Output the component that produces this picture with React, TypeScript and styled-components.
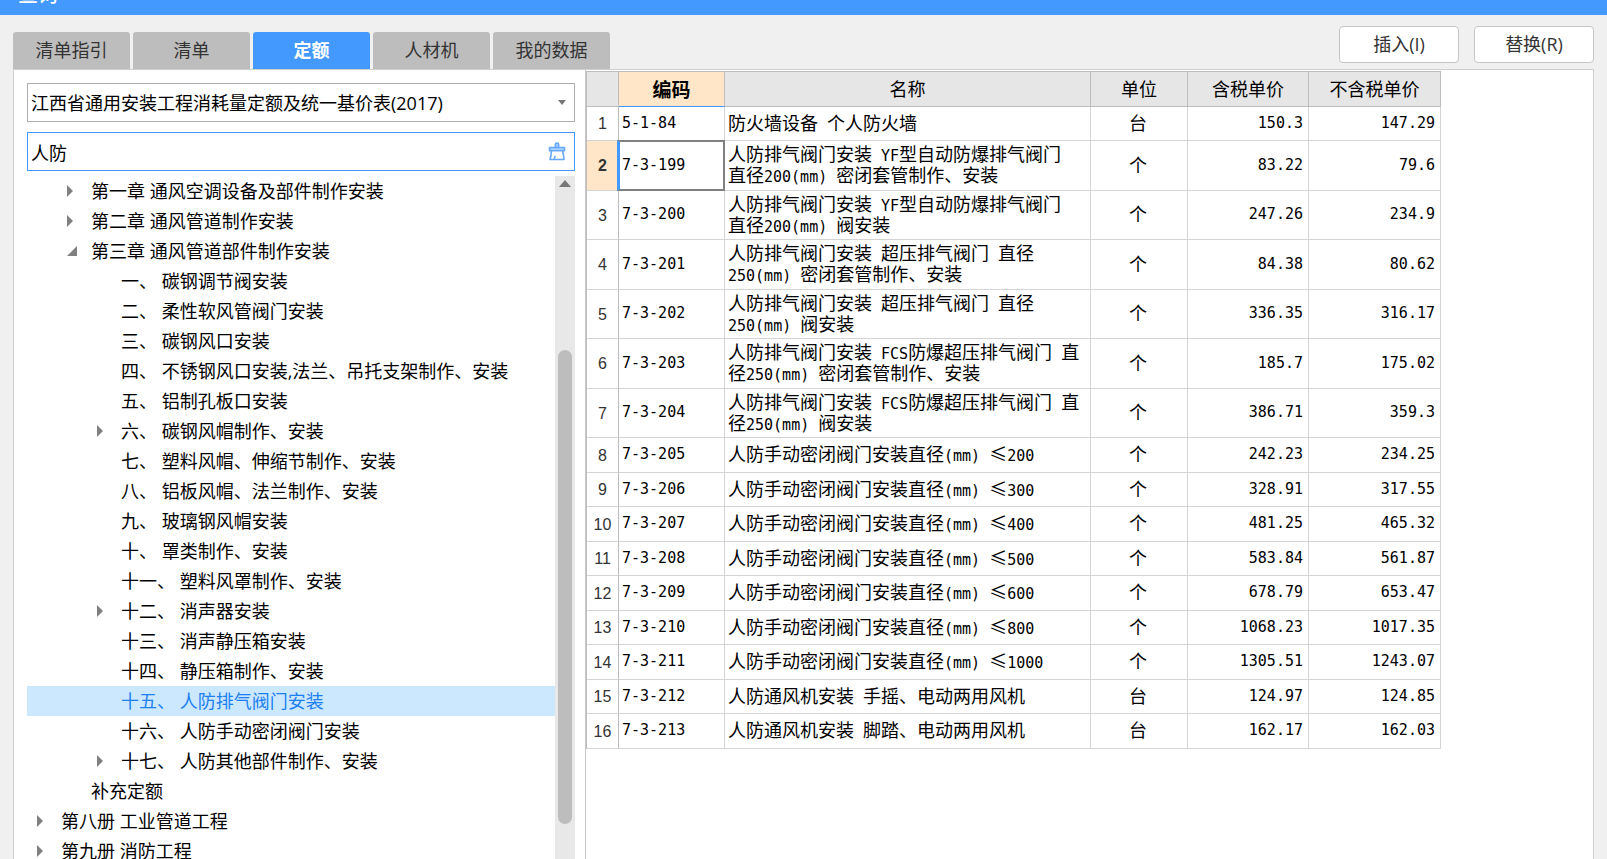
import React, { useState } from 'react';
import styled, { createGlobalStyle, css } from 'styled-components';

const uiFont = '"Open Sans", "Noto Sans CJK SC", sans-serif';
const gridFont = '"Noto Sans CJK SC", sans-serif';
const blue = '#4499ff';

const GlobalStyle = createGlobalStyle`
  * { box-sizing: border-box; }
  body { margin: 0; background: #f0f0f0; font-family: ${uiFont}; color: #000; }
  button, input, select { font: inherit; color: inherit; margin: 0; }
`;

const Window = styled.div`
  display: flex;
  flex-direction: column;
  height: 100vh;
  overflow: hidden;
`;

const TitleBar = styled.header`
  display: flex;
  align-items: flex-end;
  flex: none;
  height: 15px;
  padding-left: 18px;
  overflow: hidden;
  background: ${blue};
`;

const Title = styled.h1`
  margin: 0 0 9px;
  font-size: 20px;
  line-height: 24px;
  font-weight: 500;
  font-family: ${gridFont};
  color: #fff;
`;

const Toolbar = styled.div`
  display: flex;
  justify-content: space-between;
  align-items: flex-end;
  flex: none;
  height: 54px;
  padding: 0 13px;
`;

const Tabs = styled.div`
  display: flex;
  gap: 3px;
`;

const Tab = styled.button<{ $active: boolean }>`
  width: 117px;
  height: 37px;
  padding: 0 0 2px;
  border: 0;
  border-radius: 3px 3px 0 0;
  font-size: 18px;
  line-height: 24px;
  background: ${(p) => (p.$active ? blue : '#bdbdbd')};
  color: ${(p) => (p.$active ? '#fff' : '#333')};
  font-weight: ${(p) => (p.$active ? 700 : 400)};
`;

const Actions = styled.div`
  display: flex;
  gap: 15px;
  padding-bottom: 6px;
`;

const ActionButton = styled.button`
  width: 120px;
  height: 37px;
  padding: 0 0 2px;
  border: 1px solid #c6c6c6;
  border-radius: 4px;
  background: #fff;
  color: #333;
  font-size: 18px;
  line-height: 24px;
`;

const Panel = styled.main`
  display: flex;
  flex: 1;
  min-height: 0;
  margin: 0 13px;
  border: 1px solid #d0d0d0;
  border-bottom: 0;
  background: #fff;
`;

const Sidebar = styled.section`
  display: flex;
  flex-direction: column;
  flex: none;
  width: 571px;
  padding: 13px 10px 0 13px;
`;

const Field = styled.div<{ $focused?: boolean }>`
  display: flex;
  align-items: center;
  flex: none;
  height: 39px;
  margin-bottom: ${(p) => (p.$focused ? 5 : 10)}px;
  padding-right: 8px;
  border: 1px solid ${(p) => (p.$focused ? blue : '#adadad')};
`;

const control = css`
  flex: 1;
  min-width: 0;
  height: 100%;
  padding: 0 3px;
  border: 0;
  outline: 0;
  background: none;
  font-size: 18px;
`;

const LibrarySelect = styled.select`
  ${control}
  appearance: none;
`;

const SearchInput = styled.input`
  ${control}
`;

const IconButton = styled.button`
  display: flex;
  padding: 0;
  border: 0;
  background: none;
`;

const TreeArea = styled.div`
  display: flex;
  flex: 1;
  min-height: 0;
`;

const Tree = styled.ul`
  flex: 1;
  margin: 0;
  padding: 0;
  list-style: none;
  overflow: hidden;
`;

const TreeRow = styled.li<{ $level: number; $selected: boolean }>`
  display: flex;
  align-items: center;
  height: 30px;
  padding-left: ${(p) => 10 + p.$level * 30}px;
  font-size: 18px;
  line-height: 30px;
  white-space: nowrap;
  background: ${(p) => (p.$selected ? '#cce8ff' : 'transparent')};
  color: ${(p) => (p.$selected ? '#1e80f0' : '#000')};
`;

const ArrowSlot = styled.span`
  display: flex;
  flex: none;
  width: 24px;
`;

const ScrollTrack = styled.div`
  display: flex;
  flex-direction: column;
  align-items: center;
  flex: none;
  width: 20px;
  background: #e8e8e8;
`;

const ScrollThumb = styled.div`
  flex: none;
  width: 14px;
  height: 474px;
  margin-top: 161px;
  border-radius: 7px;
  background: #bdbdbd;
`;

const Content = styled.section`
  flex: 1;
  min-width: 0;
  padding-top: 1px;
  border-left: 1px solid #c8c8c8;
`;

const Grid = styled.table`
  width: 855px;
  table-layout: fixed;
  border-collapse: separate;
  border-spacing: 0;
  border-top: 1px solid #bdbdbd;
  border-left: 1px solid #bdbdbd;
  font-family: ${gridFont};
  font-size: 18px;
  line-height: 21px;
`;

const Col = styled.col<{ $w: number }>`
  width: ${(p) => p.$w}px;
`;

const HeadCell = styled.th<{ $active?: boolean }>`
  height: 35px;
  padding: 0 0 2px;
  border-right: 1px solid #bdbdbd;
  border-bottom: 1px solid ${(p) => (p.$active ? blue : '#bdbdbd')};
  background: ${(p) => (p.$active ? '#ffe6c8' : '#e6e6e6')};
  font-size: ${(p) => (p.$active ? 19 : 18)}px;
  font-weight: ${(p) => (p.$active ? 700 : 400)};
`;

const Row = styled.tr<{ $tall: boolean }>`
  height: ${(p) => (p.$tall ? 49 : 34)}px;
  &:nth-child(even) {
    height: ${(p) => (p.$tall ? 50 : 35)}px;
  }
`;

const Cell = styled.td<{ $align?: 'left' | 'center' | 'right' }>`
  padding: 0 5px 3px 3px;
  border-right: 1px solid #d4d4d4;
  border-bottom: 1px solid #d4d4d4;
  text-align: ${(p) => p.$align || 'left'};
  vertical-align: middle;
`;

const RowNumber = styled.th<{ $active: boolean }>`
  padding: 0;
  border-right: 1px solid #bdbdbd;
  border-bottom: 1px solid #d4d4d4;
  font-family: "Liberation Sans", sans-serif;
  font-size: 16px;
  font-weight: ${(p) => (p.$active ? 700 : 400)};
  color: #333;
  background: ${(p) => (p.$active ? '#ffe6c8' : '#fff')};
`;

const CodeCell = styled(Cell)<{ $current: boolean }>`
  position: relative;
  ${(p) =>
    p.$current &&
    css`
      &::after {
        content: '';
        position: absolute;
        inset: -1px -1px -1px -2px;
        border: 3px solid #808080;
        border-width: 2px 2px 2px 3px;
        border-left-color: ${blue};
      }
    `}
`;

const Mono = styled.span`
  font-family: "DejaVu Sans Mono", monospace;
  font-size: 15px;
  line-height: 15px;
`;

const Num = styled(Mono)`
  display: block;
  padding-top: 2px;
`;

type Node = { text: string; level: number; arrow?: 'closed' | 'open' };

const nodes: Node[] = [
  { text: '第一章 通风空调设备及部件制作安装', level: 1, arrow: 'closed' },
  { text: '第二章 通风管道制作安装', level: 1, arrow: 'closed' },
  { text: '第三章 通风管道部件制作安装', level: 1, arrow: 'open' },
  { text: '一、 碳钢调节阀安装', level: 2 },
  { text: '二、 柔性软风管阀门安装', level: 2 },
  { text: '三、 碳钢风口安装', level: 2 },
  { text: '四、 不锈钢风口安装,法兰、吊托支架制作、安装', level: 2 },
  { text: '五、 铝制孔板口安装', level: 2 },
  { text: '六、 碳钢风帽制作、安装', level: 2, arrow: 'closed' },
  { text: '七、 塑料风帽、伸缩节制作、安装', level: 2 },
  { text: '八、 铝板风帽、法兰制作、安装', level: 2 },
  { text: '九、 玻璃钢风帽安装', level: 2 },
  { text: '十、 罩类制作、安装', level: 2 },
  { text: '十一、 塑料风罩制作、安装', level: 2 },
  { text: '十二、 消声器安装', level: 2, arrow: 'closed' },
  { text: '十三、 消声静压箱安装', level: 2 },
  { text: '十四、 静压箱制作、安装', level: 2 },
  { text: '十五、 人防排气阀门安装', level: 2 },
  { text: '十六、 人防手动密闭阀门安装', level: 2 },
  { text: '十七、 人防其他部件制作、安装', level: 2, arrow: 'closed' },
  { text: '补充定额', level: 1 },
  { text: '第八册 工业管道工程', level: 0, arrow: 'closed' },
  { text: '第九册 消防工程', level: 0, arrow: 'closed' },
];

type Item = [code: string, name: string, unit: string, taxed: string, untaxed: string, tall?: boolean];

const items: Item[] = [
  ['5-1-84', '防火墙设备 个人防火墙', '台', '150.3', '147.29'],
  ['7-3-199', '人防排气阀门安装 YF型自动防爆排气阀门 直径200(mm) 密闭套管制作、安装', '个', '83.22', '79.6', true],
  ['7-3-200', '人防排气阀门安装 YF型自动防爆排气阀门 直径200(mm) 阀安装', '个', '247.26', '234.9', true],
  ['7-3-201', '人防排气阀门安装 超压排气阀门 直径250(mm) 密闭套管制作、安装', '个', '84.38', '80.62', true],
  ['7-3-202', '人防排气阀门安装 超压排气阀门 直径250(mm) 阀安装', '个', '336.35', '316.17', true],
  ['7-3-203', '人防排气阀门安装 FCS防爆超压排气阀门 直径250(mm) 密闭套管制作、安装', '个', '185.7', '175.02', true],
  ['7-3-204', '人防排气阀门安装 FCS防爆超压排气阀门 直径250(mm) 阀安装', '个', '386.71', '359.3', true],
  ['7-3-205', '人防手动密闭阀门安装直径(mm) ≤200', '个', '242.23', '234.25'],
  ['7-3-206', '人防手动密闭阀门安装直径(mm) ≤300', '个', '328.91', '317.55'],
  ['7-3-207', '人防手动密闭阀门安装直径(mm) ≤400', '个', '481.25', '465.32'],
  ['7-3-208', '人防手动密闭阀门安装直径(mm) ≤500', '个', '583.84', '561.87'],
  ['7-3-209', '人防手动密闭阀门安装直径(mm) ≤600', '个', '678.79', '653.47'],
  ['7-3-210', '人防手动密闭阀门安装直径(mm) ≤800', '个', '1068.23', '1017.35'],
  ['7-3-211', '人防手动密闭阀门安装直径(mm) ≤1000', '个', '1305.51', '1243.07'],
  ['7-3-212', '人防通风机安装 手摇、电动两用风机', '台', '124.97', '124.85'],
  ['7-3-213', '人防通风机安装 脚踏、电动两用风机', '台', '162.17', '162.03'],
];

/* Latin letters, digits and spaces take half the width of a Chinese character. */
const HalfWidth = ({ text }: { text: string }) => (
  <>
    {text.split(/([\x20-\x7e]+)/).map((part, i) => (i % 2 ? <Mono key={i}>{part}</Mono> : part))}
  </>
);

const Arrow = ({ kind }: { kind?: Node['arrow'] }) => {
  if (kind === 'closed') {
    return (
      <svg width="6" height="12" viewBox="0 0 6 12" aria-hidden="true">
        <path d="M0 0L6 6L0 12Z" fill="#808080" />
      </svg>
    );
  }
  if (kind === 'open') {
    return (
      <svg width="10" height="10" viewBox="0 0 10 10" aria-hidden="true">
        <path d="M10 0V10H0Z" fill="#808080" />
      </svg>
    );
  }
  return null;
};

const tabs = ['清单指引', '清单', '定额', '人材机', '我的数据'];

export default function App() {
  const [tab, setTab] = useState(2);
  const [selected, setSelected] = useState(17);
  const [query, setQuery] = useState('人防');

  return (
    <Window>
      <GlobalStyle />
      <TitleBar>
        <Title>查询</Title>
      </TitleBar>
      <Toolbar>
        <Tabs role="tablist">
          {tabs.map((t, i) => (
            <Tab key={t} type="button" role="tab" aria-selected={i === tab} $active={i === tab} onClick={() => setTab(i)}>
              {t}
            </Tab>
          ))}
        </Tabs>
        <Actions>
          <ActionButton type="button">插入(I)</ActionButton>
          <ActionButton type="button">替换(R)</ActionButton>
        </Actions>
      </Toolbar>
      <Panel>
        <Sidebar>
          <Field>
            <LibrarySelect aria-label="定额库">
              <option>江西省通用安装工程消耗量定额及统一基价表(2017)</option>
            </LibrarySelect>
            <svg width="8" height="5" viewBox="0 0 8 5" aria-hidden="true">
              <path d="M0 0H8L4 5Z" fill="#777" />
            </svg>
          </Field>
          <Field $focused>
            <SearchInput aria-label="搜索" value={query} onChange={(e) => setQuery(e.target.value)} />
            <IconButton type="button" aria-label="清除" onClick={() => setQuery('')}>
              <svg width="18" height="19" viewBox="0 0 18 19" fill="none" stroke="#66a9fb" strokeWidth="1.6" strokeLinejoin="round">
                <path d="M7.300 5.500V2.500Q7.300 1 9 1T10.700 2.500V5.500" fill="#a9d0ff" />
                <path d="M1.500 5.500H16.500V8.800H1.500Z" fill="#a9d0ff" />
                <path d="M3.300 9Q3.300 14 2 17.500H16Q15.700 14 14.700 9" />
                <path d="M6 17Q7 15.500 7 13.800" />
              </svg>
            </IconButton>
          </Field>
          <TreeArea>
            <Tree role="tree">
              {nodes.map((n, i) => (
                <TreeRow
                  key={n.text}
                  role="treeitem"
                  aria-selected={i === selected}
                  $level={n.level}
                  $selected={i === selected}
                  onClick={() => setSelected(i)}
                >
                  <ArrowSlot>
                    <Arrow kind={n.arrow} />
                  </ArrowSlot>
                  {n.text}
                </TreeRow>
              ))}
            </Tree>
            <ScrollTrack>
              <svg width="12" height="13" viewBox="0 0 12 13" aria-hidden="true">
                <path d="M0 11L6 4L12 11Z" fill="#777" />
              </svg>
              <ScrollThumb />
            </ScrollTrack>
          </TreeArea>
        </Sidebar>
        <Content>
          <Grid>
            <colgroup>
              {[32, 106, 366, 97, 121, 132].map((w) => (
                <Col key={w} $w={w} />
              ))}
            </colgroup>
            <thead>
              <tr>
                <HeadCell />
                <HeadCell $active>编码</HeadCell>
                <HeadCell>名称</HeadCell>
                <HeadCell>单位</HeadCell>
                <HeadCell>含税单价</HeadCell>
                <HeadCell>不含税单价</HeadCell>
              </tr>
            </thead>
            <tbody>
              {items.map(([code, name, unit, taxed, untaxed, tall], i) => (
                <Row key={code} $tall={!!tall}>
                  <RowNumber scope="row" $active={i === 1}>{i + 1}</RowNumber>
                  <CodeCell $current={i === 1}>
                    <Num>{code}</Num>
                  </CodeCell>
                  <Cell>
                    <HalfWidth text={name} />
                  </Cell>
                  <Cell $align="center">{unit}</Cell>
                  <Cell $align="right">
                    <Num>{taxed}</Num>
                  </Cell>
                  <Cell $align="right">
                    <Num>{untaxed}</Num>
                  </Cell>
                </Row>
              ))}
            </tbody>
          </Grid>
        </Content>
      </Panel>
    </Window>
  );
}
